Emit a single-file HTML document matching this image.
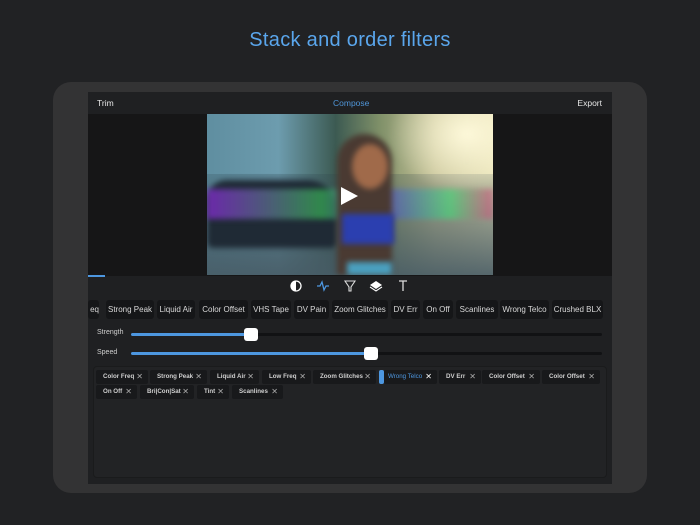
<!DOCTYPE html>
<html><head><style>
*{margin:0;padding:0;box-sizing:border-box}
body{width:700px;height:525px;background:#212224;font-family:"Liberation Sans",sans-serif;position:relative;overflow:hidden}
.a{position:absolute}
.title{left:0;width:700px;top:29px;text-align:center;color:#5aa6ec;font-size:20px;letter-spacing:0.3px}
.frame{left:53px;top:82px;width:594px;height:411px;background:#333334;border-radius:18px}
.screen{left:88px;top:92px;width:524px;height:392px;background:#1f2022}
.nav{left:88px;top:92px;width:524px;height:22px;background:#1f2022;font-size:8.5px;color:#e6e6e6}
.vid{left:88px;top:114px;width:524px;height:162px;background:#161617}
.chip{position:absolute;top:300px;height:19px;background:#151618;border-radius:3px;color:#d8d8d8;font-size:8px;line-height:19px;text-align:center;white-space:nowrap;overflow:hidden}
.tag{position:absolute;height:14px;background:#18191b;border-radius:2px;color:#cfcfcf;font-size:6.2px;font-weight:bold;line-height:14px;padding-left:7px;white-space:nowrap}
.tag i{position:absolute;right:5px;top:0;font-style:normal;font-weight:normal;font-size:8px;color:#aaa}
.lbl{font-size:7px;color:#cfcfcf}
.track{height:3px;background:#111214;border-radius:2px}
.fill{height:3px;background:#4d97e0;border-radius:2px}
.knob{width:14px;height:13px;background:#fff;border-radius:3px}
.bl{filter:blur(3px)}
</style></head><body>
<div class="a title">Stack and order filters</div>
<div class="a frame"></div>
<div class="a screen"></div>
<div class="a nav">
 <span class="a" style="left:9px;top:6px">Trim</span>
 <span class="a" style="left:245px;top:6px;color:#4f95d8">Compose</span>
 <span class="a" style="right:10px;top:6px">Export</span>
</div>
<div class="a vid"></div>
<div class="a" style="left:207px;top:114px;width:286px;height:161px;overflow:hidden;background:linear-gradient(90deg,#5f8ea0 0%,#6d9cae 25%,#3c5a52 45%,#7e8f68 60%,#c9c59a 80%,#e9e3b8 100%)">
 <div class="a" style="left:0;top:60px;width:286px;height:101px;background:linear-gradient(180deg,rgba(40,60,70,0.2),rgba(70,90,100,0.9))"></div>
 <div class="a bl" style="left:180px;top:-40px;width:160px;height:120px;background:radial-gradient(ellipse at center,rgba(255,250,220,0.95),rgba(255,240,200,0) 70%)"></div>
 <div class="a bl" style="left:0;top:66px;width:130px;height:68px;background:#1f2a35;border-radius:20px 30px 6px 6px"></div>
 <div class="a bl" style="left:0;top:75px;width:286px;height:30px;background:linear-gradient(90deg,rgba(140,40,220,.7),rgba(60,200,90,.6) 40%,rgba(90,60,220,.6) 60%,rgba(60,220,120,.6) 85%,rgba(220,60,120,.5));"></div>
 <div class="a bl" style="left:130px;top:20px;width:55px;height:141px;background:#4a3a32;border-radius:30px 30px 0 0"></div>
 <div class="a bl" style="left:145px;top:30px;width:36px;height:45px;background:#a06a4a;border-radius:50%"></div>
 <div class="a bl" style="left:135px;top:100px;width:52px;height:30px;background:#2b3fb0"></div>
 <div class="a bl" style="left:140px;top:148px;width:45px;height:13px;background:#4aa0c0"></div>
 <div class="a" style="left:134px;top:73px;width:0;height:0;border-left:17px solid #fff;border-top:9px solid transparent;border-bottom:9px solid transparent"></div>
</div>
<div class="a" style="left:88px;top:275px;width:17px;height:2px;background:#4d97e0"></div>
<svg class="a" style="left:285px;top:279px" width="130" height="14" viewBox="0 0 130 14">
 <circle cx="11" cy="7" r="5" fill="none" stroke="#fff" stroke-width="1.3"/><path d="M11 2a5 5 0 0 0 0 10z" fill="#fff"/>
 <path d="M32 7h3l2-4 2 8 2-4h3" fill="none" stroke="#4d97e0" stroke-width="1.3"/>
 <path d="M60 2h10l-4 6v4h-2v-4z" fill="none" stroke="#ddd" stroke-width="1.1"/>
 <path d="M91 2l6 4-6 4-6-4z" fill="#fff"/><path d="M85 8l6 4 6-4" fill="none" stroke="#fff" stroke-width="1.1"/>
 <path d="M114 2h8M118 2v10" stroke="#ddd" stroke-width="1.3"/>
</svg>
<div class="chip" style="left:88px;width:11px;text-align:right">eq</div>
<div class="chip" style="left:106px;width:48px">Strong Peak</div>
<div class="chip" style="left:157px;width:38px">Liquid Air</div>
<div class="chip" style="left:199px;width:49px">Color Offset</div>
<div class="chip" style="left:251px;width:40px">VHS Tape</div>
<div class="chip" style="left:294px;width:35px">DV Pain</div>
<div class="chip" style="left:332px;width:56px">Zoom Glitches</div>
<div class="chip" style="left:391px;width:29px">DV Err</div>
<div class="chip" style="left:423px;width:30px">On Off</div>
<div class="chip" style="left:456px;width:42px">Scanlines</div>
<div class="chip" style="left:500px;width:49px">Wrong Telco</div>
<div class="chip" style="left:552px;width:51px">Crushed BLX</div>
<div class="a lbl" style="left:97px;top:329px">Strength</div>
<div class="a track" style="left:131px;top:333px;width:471px"></div>
<div class="a fill" style="left:131px;top:333px;width:120px"></div>
<div class="a knob" style="left:244px;top:328px"></div>
<div class="a lbl" style="left:97px;top:349px">Speed</div>
<div class="a track" style="left:131px;top:352px;width:471px"></div>
<div class="a fill" style="left:131px;top:352px;width:240px"></div>
<div class="a knob" style="left:364px;top:347px"></div>
<div class="a" style="left:93px;top:366px;width:514px;height:112px;background:#222325;border:1px solid #1a1b1c;border-radius:4px"></div>
<div class="tag" style="left:96px;top:370px;width:52px">Color Freq<i>✕</i></div>
<div class="tag" style="left:150px;top:370px;width:57px">Strong Peak<i>✕</i></div>
<div class="tag" style="left:210px;top:370px;width:49px">Liquid Air<i>✕</i></div>
<div class="tag" style="left:262px;top:370px;width:49px">Low Freq<i>✕</i></div>
<div class="tag" style="left:313px;top:370px;width:63px">Zoom Glitches<i>✕</i></div>
<div class="a" style="left:379px;top:370px;width:5px;height:14px;background:#4d97e0;border-radius:2px"></div>
<div class="tag" style="left:384px;top:370px;width:53px;color:#4d97e0;font-weight:normal;padding-left:4px">Wrong Telco<i style="color:#fff">✕</i></div>
<div class="tag" style="left:439px;top:370px;width:42px">DV Err<i>✕</i></div>
<div class="tag" style="left:482px;top:370px;width:58px">Color Offset<i>✕</i></div>
<div class="tag" style="left:542px;top:370px;width:58px">Color Offset<i>✕</i></div>
<div class="tag" style="left:96px;top:385px;width:41px">On Off<i>✕</i></div>
<div class="tag" style="left:140px;top:385px;width:54px">Bri|Con|Sat<i>✕</i></div>
<div class="tag" style="left:197px;top:385px;width:32px">Tint<i>✕</i></div>
<div class="tag" style="left:232px;top:385px;width:51px">Scanlines<i>✕</i></div>
</body></html>
